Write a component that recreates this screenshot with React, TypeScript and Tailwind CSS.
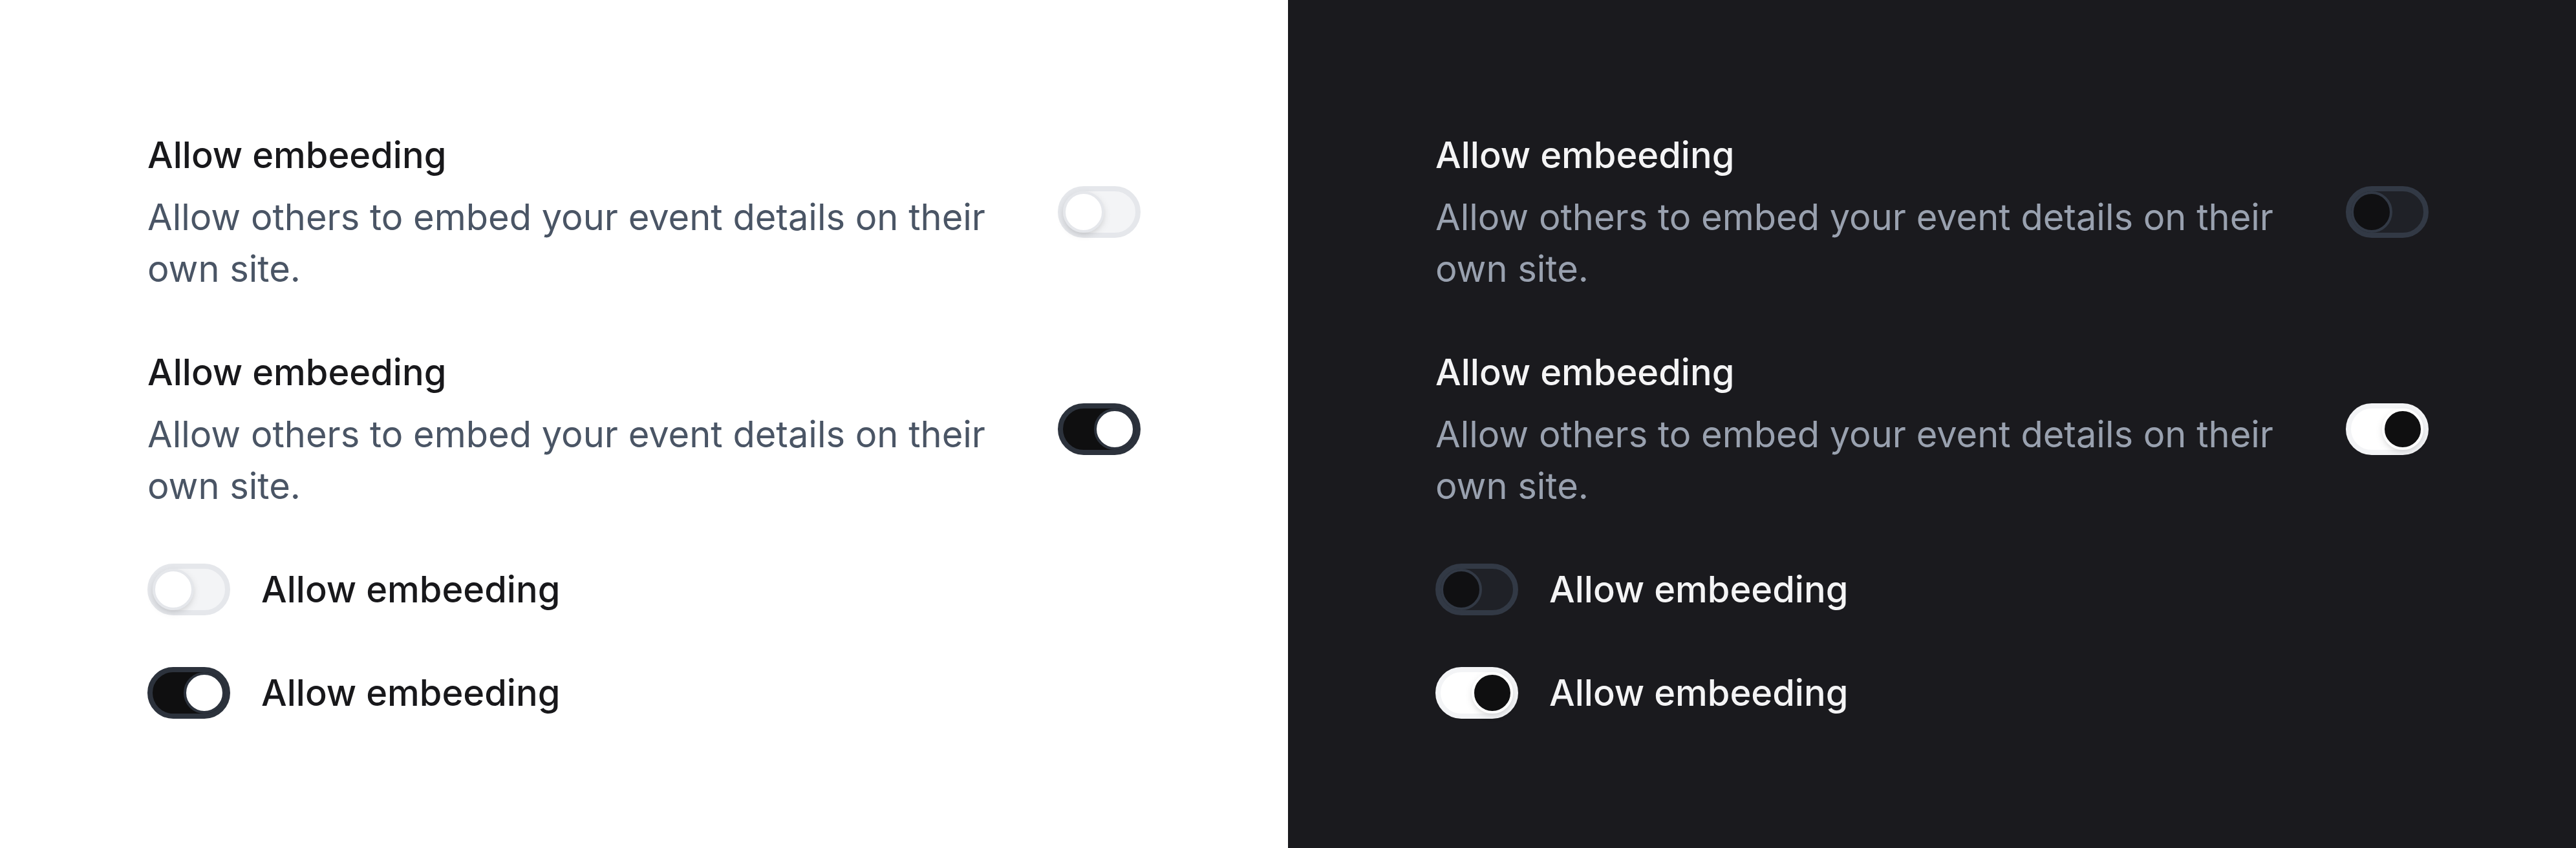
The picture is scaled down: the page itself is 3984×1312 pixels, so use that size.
// Settings toggles shown side by side in light and dark themes

interface ToggleProps {
  on: boolean;
  dark: boolean;
}

function Toggle({ on, dark }: ToggleProps) {
  // Track and thumb colours depend on theme and state
  let track = '';
  let thumb = '';
  if (!dark && !on) {
    track = 'bg-gray-100 border-gray-200';
    thumb = 'bg-white border-gray-200 shadow-sm';
  } else if (!dark && on) {
    track = 'bg-[#0f0f10] border-[#2c323c]';
    thumb = 'bg-white border-[#2c323c]';
  } else if (dark && !on) {
    track = 'bg-[#1f2127] border-[#323945]';
    thumb = 'bg-[#101012] border-[#323945]';
  } else {
    track = 'bg-white border-gray-100';
    thumb = 'bg-[#0f0f10] border-white shadow-sm';
  }
  return (
    <button
      type="button"
      role="switch"
      aria-checked={on}
      className={`relative inline-flex h-5 w-8 shrink-0 items-center rounded-full border-2 ${track}`}
    >
      <span
        className={`h-4 w-4 rounded-full border ${thumb} ${on ? 'translate-x-3' : 'translate-x-0'}`}
      />
    </button>
  );
}

function Panel({ dark }: { dark: boolean }) {
  const title = dark ? 'text-[#f4f4f5]' : 'text-[#18181b]';
  const desc = dark ? 'text-gray-400' : 'text-gray-600';
  return (
    <div
      className={`flex h-[328px] w-1/2 items-center justify-center ${dark ? 'bg-[#1a1a1e]' : 'bg-white'}`}
    >
      <div className="w-96 space-y-5">
        {[false, true].map((on) => (
          <div key={String(on)} className="flex items-center justify-between gap-6">
            <div>
              <p className={`text-sm font-medium ${title}`}>Allow embeeding</p>
              <p className={`mt-1 text-sm ${desc}`}>
                Allow others to embed your event details on their own site.
              </p>
            </div>
            <Toggle on={on} dark={dark} />
          </div>
        ))}
        {[false, true].map((on) => (
          <div key={'inline-' + String(on)} className="flex items-center gap-3">
            <Toggle on={on} dark={dark} />
            <span className={`text-sm font-medium ${title}`}>Allow embeeding</span>
          </div>
        ))}
      </div>
    </div>
  );
}

export default function App() {
  return (
    <div className="flex w-[996px] font-['Inter',sans-serif] antialiased [zoom:4]">
      <Panel dark={false} />
      <Panel dark={true} />
    </div>
  );
}
